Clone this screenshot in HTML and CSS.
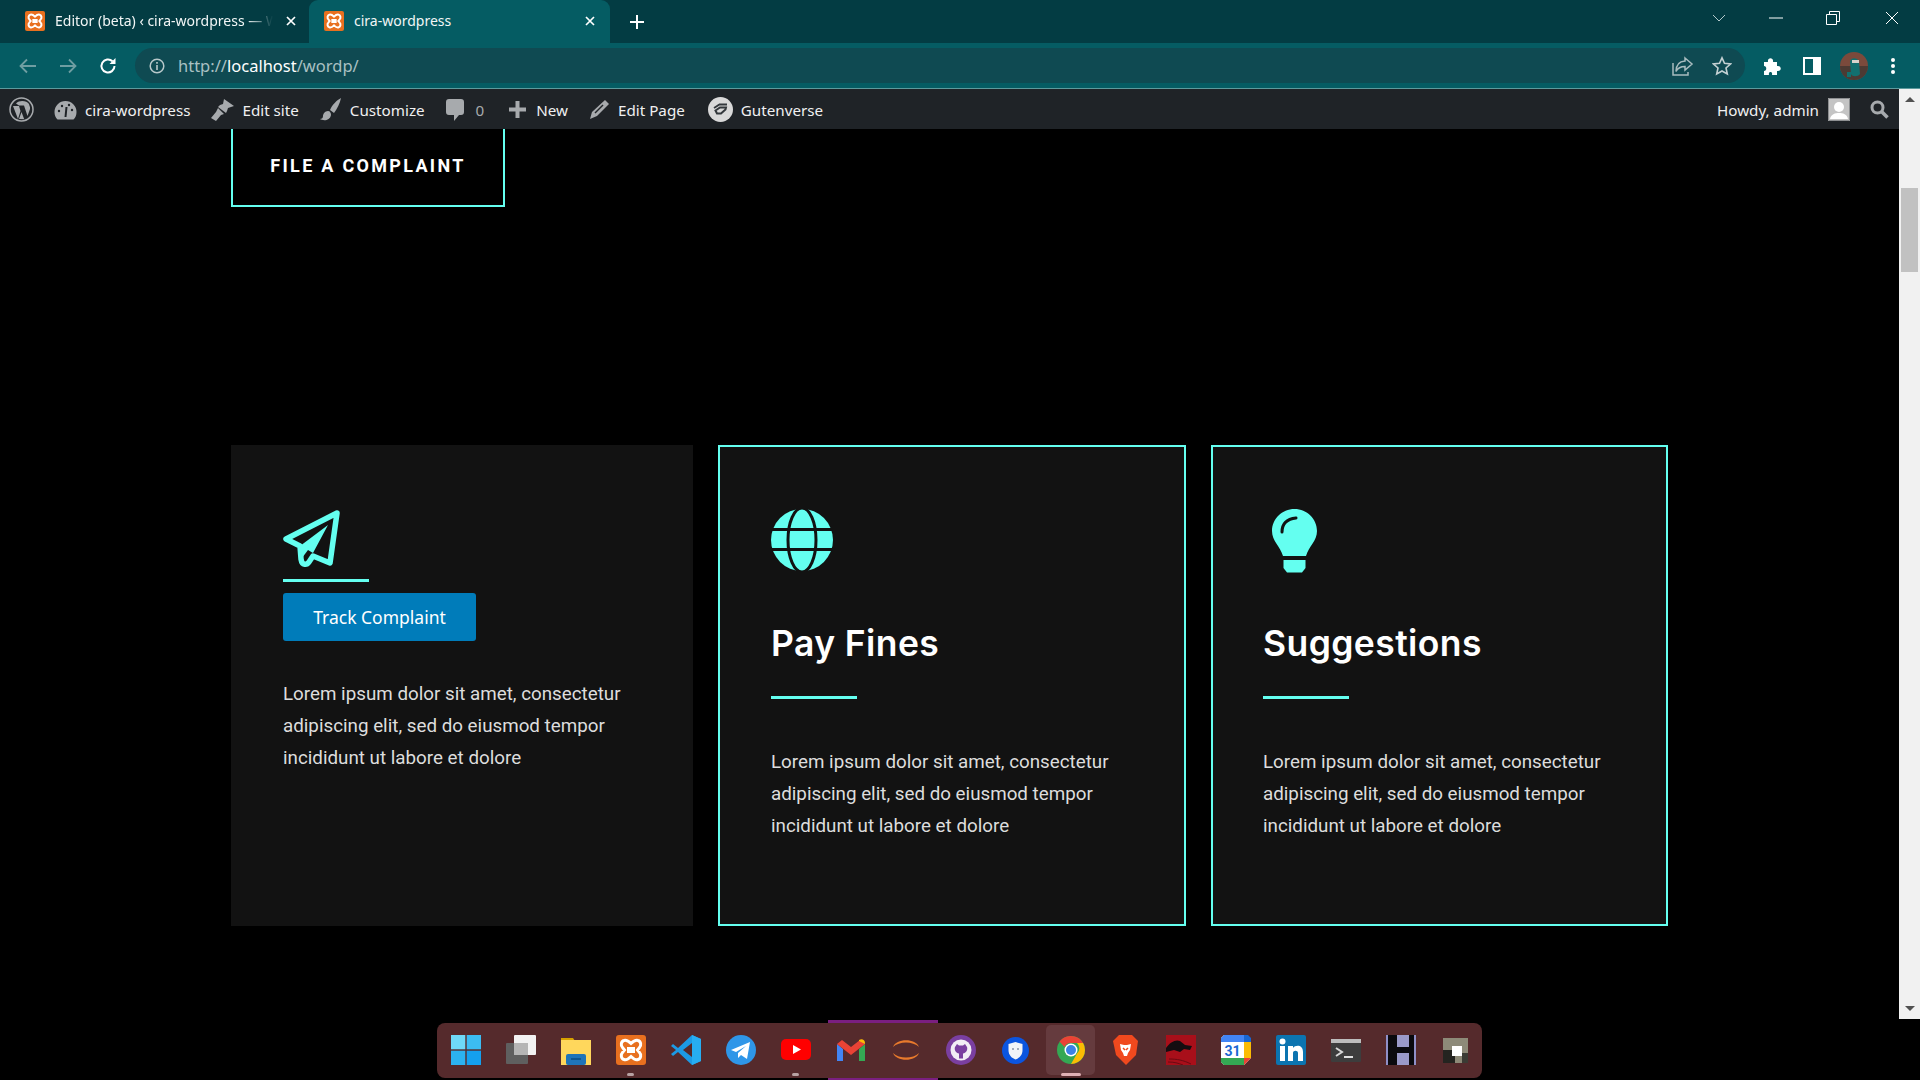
FILE: index.html
```html
<!DOCTYPE html>
<html lang="en">
<head>
    <meta charset="UTF-8">
    <meta name="viewport" content="width=device-width, initial-scale=1.0">
    <title>cira-wordpress</title>
    <link rel="stylesheet" href="styles.css">
</head>
<body>
    <svg class="defs" width="0" height="0">
        <symbol id="xampp" viewBox="0 0 30 30">
            <rect width="30" height="30" rx="3" fill="#e8701f"/>
            <path d="M8 5.500c3-1 5 1 7 3 2-2 4-4 7-3 3 .8 3.500 5 1.500 7L21.500 15l2 2.500c2 2 1.500 6.200-1.500 7-3 1-5-1-7-3-2 2-4 4-7 3-3-.8-3.500-5-1.500-7l2-2.500-2-2.500c-2-2-1.500-6.200 1.500-7zM11 13.500h8M11 16.500h8" fill="none" stroke="#fff" stroke-width="3"/>
        </symbol>
        <symbol id="tab-x" viewBox="0 0 12 12">
            <path d="M2 2l8 8M10 2l-8 8" stroke="#fff" stroke-width="1.700" fill="none"/>
        </symbol>
    </svg>

    <header class="tabstrip">
        <div class="tab">
            <svg class="favicon"><use href="#xampp"/></svg>
            <span class="tab-title tab-fade">Editor (beta) ‹ cira-wordpress — WordPress</span>
            <svg class="tab-close"><use href="#tab-x"/></svg>
        </div>
        <div class="tab tab-active">
            <svg class="favicon"><use href="#xampp"/></svg>
            <span class="tab-title">cira-wordpress</span>
            <svg class="tab-close"><use href="#tab-x"/></svg>
        </div>
        <svg class="new-tab" width="14" height="14" viewBox="0 0 14 14"><path d="M7 0v14M0 7h14" stroke="#fff" stroke-width="2"/></svg>
        <div class="window-controls">
            <svg width="14" height="8" viewBox="0 0 14 8"><path d="M1 1l6 6 6-6" fill="none" stroke="#b5c9cb"/></svg>
            <svg class="ctl-min" width="14" height="2" viewBox="0 0 14 2"><path d="M0 1h14" stroke="#fff"/></svg>
            <svg class="ctl-max" width="14" height="14" viewBox="0 0 14 14"><path d="M.5 3.500h10v10H.5zM3.500 3.500v-3h10v10h-3" fill="none" stroke="#fff"/></svg>
            <svg class="ctl-close" width="14" height="14" viewBox="0 0 14 14"><path d="M1 1l12 12M13 1L1 13" stroke="#fff"/></svg>
        </div>
    </header>

    <div class="toolbar">
        <svg class="nav-icon" width="18" height="16" viewBox="0 0 18 16"><path d="M17 8H2M8 1.500L1.500 8 8 14.500" fill="none" stroke="#6f9ea2" stroke-width="1.800"/></svg>
        <svg class="nav-icon" width="18" height="16" viewBox="0 0 18 16"><path d="M1 8h15M10 1.500L16.500 8 10 14.500" fill="none" stroke="#6f9ea2" stroke-width="1.800"/></svg>
        <svg class="nav-icon" width="18" height="18" viewBox="0 0 18 18"><path d="M15.500 9a6.500 6.500 0 1 1-2-4.700" fill="none" stroke="#fff" stroke-width="2"/><path d="M16.500 1v6h-6z" fill="#fff"/></svg>
        <div class="omnibox">
            <svg width="16" height="16" viewBox="0 0 16 16"><circle cx="8" cy="8" r="6.800" fill="none" stroke="#b8c8ca" stroke-width="1.500"/><path d="M8 7v5M8 4v1.800" stroke="#b8c8ca" stroke-width="1.600"/></svg>
            <span class="url">http://<b>localhost</b>/wordp/</span>
            <svg class="omni-share" width="22" height="20" viewBox="0 0 22 20"><path d="M13 2l7 6-7 6v-3.500c-4 0-7 1-9 5 0-6 3-10 9-10.500zM1 7v12h15v-3" fill="none" stroke="#a9bcbf" stroke-width="1.500"/></svg>
            <svg width="20" height="20" viewBox="0 0 20 20"><path d="M10 1.800l2.500 5.500 6 .7-4.500 4 1.300 6L10 15l-5.300 3 1.300-6-4.500-4 6-.7z" fill="none" stroke="#c3d0d2" stroke-width="1.600"/></svg>
        </div>
        <svg class="tool-puzzle" width="19" height="19" viewBox="0 0 19 19"><path d="M1 6h4c-1-5 6-5 5 0h4v4c5-1 5 6 0 5v4H9c1-4-4-4-3 0H1v-4c3 0 3-5 0-5z" fill="#fff"/></svg>
        <svg class="tool-side" width="18" height="18" viewBox="0 0 18 18"><rect x="1" y="1" width="16" height="16" fill="none" stroke="#fff" stroke-width="2"/><rect x="10" y="1" width="7" height="16" fill="#fff"/></svg>
        <svg class="tool-avatar" width="28" height="28" viewBox="0 0 28 28"><circle cx="14" cy="14" r="14" fill="#7b4a3c"/><path d="M0 14a14 14 0 0 0 28 0z" fill="#4c3a33"/><path d="M10 10c0-5 8-5 9 0l1 12c-2 3-8 3-9 0z" fill="#12706f"/><rect x="12" y="8" width="7" height="3" fill="#d8d4cc"/><path d="M7 20h4v5H7z" fill="#12706f"/></svg>
        <svg class="tool-menu" width="4" height="16" viewBox="0 0 4 16"><circle cx="2" cy="2" r="2" fill="#fff"/><circle cx="2" cy="8" r="2" fill="#fff"/><circle cx="2" cy="14" r="2" fill="#fff"/></svg>
    </div>

    <div class="viewport">
        <div class="site-column">
            <nav class="adminbar">
                <div class="ab-item ab-logo">
                    <svg width="25" height="25" viewBox="0 0 25 25"><circle cx="12.500" cy="12.500" r="11.500" fill="none" stroke="#a7aaad" stroke-width="1.500"/><path d="M4 9l5 13 2.500-8L10 9zM10 8.500h8l-3 0 3.500 10.500L21 12c.6-2-1-4-1-5-2-3-9-4.500-13-.5z" fill="#a7aaad"/><path d="M12.500 15l-2.500 7 5.200.3z" fill="#a7aaad"/></svg>
                </div>
                <div class="ab-item">
                    <svg width="23" height="20" viewBox="0 0 23 20"><path d="M11.500 1a11 11 0 0 0-11 11c0 3 1 5.500 3 7.500h16c2-2 3-4.500 3-7.500a11 11 0 0 0-11-11z" fill="#a7aaad"/><path d="M11.500 17l1-10" stroke="#1f2327" stroke-width="2"/><circle cx="5" cy="11" r="1.200" fill="#1f2327"/><circle cx="8" cy="6" r="1.200" fill="#1f2327"/><circle cx="15" cy="5" r="1.200" fill="#1f2327"/><circle cx="18" cy="10" r="1.200" fill="#1f2327"/></svg>
                    <span>cira-wordpress</span>
                </div>
                <div class="ab-item ab-edit">
                    <svg width="24" height="22" viewBox="0 0 24 22"><path d="M14 0l10 7-3 1-3 1-1 3-1 2-8-6 2-2 3-1z" fill="#a7aaad"/><path d="M8 9l6 6-3 1-5 6-5-3 5-6z" fill="#a7aaad"/></svg>
                    <span>Edit site</span>
                </div>
                <div class="ab-item">
                    <svg width="22" height="24" viewBox="0 0 22 24"><path d="M21 0c-4 2-9 7-11 12l4 3c3-4 6-10 7-15zM8 13c-3 0-5 3-5 5 0 2-1 3-3 3 3 2 10 2 11-4 0-2-1-4-3-4z" fill="#a7aaad"/></svg>
                    <span>Customize</span>
                </div>
                <div class="ab-item">
                    <svg width="18" height="24" viewBox="0 0 18 24"><path d="M3 1h12a3 3 0 0 1 3 3v10a3 3 0 0 1-3 3h-2l-5 6v-6H3a3 3 0 0 1-3-3V4a3 3 0 0 1 3-3z" fill="#a7aaad"/></svg>
                    <span class="ab-count">0</span>
                </div>
                <div class="ab-item ab-new">
                    <svg width="17" height="17" viewBox="0 0 17 17"><path d="M8.500 0v17M0 8.500h17" stroke="#a7aaad" stroke-width="4"/></svg>
                    <span>New</span>
                </div>
                <div class="ab-item">
                    <svg width="21" height="21" viewBox="0 0 21 21"><path d="M16 1l4 4L8 17l-7 3 2-7z" fill="#a7aaad"/><path d="M6 14l8-8" stroke="#1f2327" stroke-width="1.500"/></svg>
                    <span>Edit Page</span>
                </div>
                <div class="ab-item ab-guten">
                    <svg width="25" height="25" viewBox="0 0 25 25"><circle cx="12.500" cy="12.500" r="12.500" fill="#d9d9d9"/><path d="M6 11l5.500-3.500h7.500" fill="none" stroke="#33383c" stroke-width="1.800"/><path d="M7.500 13.500l4.500-3h6l-.5 2-4.500 4h-4z" fill="none" stroke="#33383c" stroke-width="2"/></svg>
                    <span>Gutenverse</span>
                </div>
                <div class="ab-right">
                    <span>Howdy, admin</span>
                    <svg class="ab-avatar" width="22" height="23" viewBox="0 0 22 23"><rect width="22" height="23" fill="#c4c4c4"/><circle cx="11" cy="9" r="5" fill="#fff"/><path d="M2 21c1-5 5-6 9-6s8 1 9 6z" fill="#fff"/><path d="M.5.500h21v22H.5z" fill="none" stroke="#8d8f91"/></svg>
                    <svg class="ab-search" width="19" height="19" viewBox="0 0 19 19"><circle cx="7.500" cy="7.500" r="5.500" fill="none" stroke="#a7aaad" stroke-width="3"/><path d="M11.500 11.500l6 6" stroke="#a7aaad" stroke-width="3.500"/></svg>
                </div>
            </nav>

            <main class="page">
                <a class="complaint-btn">FILE A COMPLAINT</a>
                <section class="cards">
                    <article class="card card-first">
                        <svg class="icon-box" width="57" height="62" viewBox="0 0 57 62"><path d="M54 4L3 30l14 7 1 13c1 7 6 6 8 3l4-6 17 7z" fill="none" stroke="#64fff0" stroke-width="5.500" stroke-linejoin="round"/><path d="M45 16L17 37l2 12 6-8 5 3z" fill="#64fff0"/></svg>
                        <div class="rule rule-tight"></div>
                        <a class="track-btn">Track Complaint</a>
                        <p class="card-text text-first">Lorem ipsum dolor sit amet, consectetur adipiscing elit, sed do eiusmod tempor incididunt ut labore et dolore</p>
                    </article>
                    <article class="card card-second">
                        <svg class="icon-box" width="62" height="62" viewBox="0 0 62 62"><circle cx="31" cy="31" r="31" fill="#64fff0"/><path d="M0 20.500h62M0 40.500h62" stroke="#121212" stroke-width="3"/><ellipse cx="31" cy="31" rx="14" ry="32" fill="none" stroke="#121212" stroke-width="3"/></svg>
                        <h2 class="card-title">Pay Fines</h2>
                        <div class="rule"></div>
                        <p class="card-text">Lorem ipsum dolor sit amet, consectetur adipiscing elit, sed do eiusmod tempor incididunt ut labore et dolore</p>
                    </article>
                    <article class="card card-third">
                        <svg class="icon-box icon-bulb" width="45" height="64" viewBox="0 0 45 64"><path d="M22.500 0C10 0 0 10 0 22c0 10 8 15 11 25h23c3-10 11-15 11-25C45 10 35 0 22.500 0z" fill="#64fff0"/><path d="M11.500 51h22v8l-3.500 4.500H15L11.500 59z" fill="#64fff0"/><path d="M10 23c0-8 5-13 14-14" fill="none" stroke="#121212" stroke-width="3" stroke-linecap="round"/></svg>
                        <h2 class="card-title">Suggestions</h2>
                        <div class="rule"></div>
                        <p class="card-text">Lorem ipsum dolor sit amet, consectetur adipiscing elit, sed do eiusmod tempor incididunt ut labore et dolore</p>
                    </article>
                </section>
            </main>
        </div>
        <div class="scrollbar">
            <div class="arrow-up"></div>
            <div class="thumb"></div>
            <div class="arrow-down"></div>
        </div>
    </div>

    <div class="taskbar-glow"></div>
    <footer class="taskbar">
        <div class="task"><svg width="30" height="30" viewBox="0 0 30 30"><rect width="14.300" height="14.300" fill="#6fd9f7"/><rect x="15.700" width="14.300" height="14.300" fill="#3cbcf2"/><rect y="15.700" width="14.300" height="14.300" fill="#2cb2f0"/><rect x="15.700" y="15.700" width="14.300" height="14.300" fill="#14a0ee"/></svg></div>
        <div class="task"><svg width="30" height="30" viewBox="0 0 30 30"><rect y="8" width="22" height="21" rx="1" fill="#5f5f5f"/><rect x="8" width="22" height="20" rx="1" fill="#f2f2f2"/><rect x="8" y="8" width="14" height="12" fill="#b5b5b5"/></svg></div>
        <div class="task"><svg width="30" height="30" viewBox="0 0 30 30"><path d="M0 3h12l2 3h-14z" fill="#d6a100"/><rect y="5" width="30" height="25" fill="#ffd75c"/><rect x="5" y="19" width="20" height="11" rx="2" fill="#1f74b8"/><path d="M10 24h10" stroke="#0b4d85" stroke-width="1.500"/></svg></div>
        <div class="task"><svg width="30" height="30"><use href="#xampp"/></svg><i class="run-dot"></i></div>
        <div class="task"><svg width="30" height="30" viewBox="0 0 30 30"><path d="M21 0l9 4v22l-9 4L7 17l-5 4-2-2 5-4-5-4 2-2 5 4z" fill="#1c9be6"/><path d="M21 0l9 4v22l-9 4z" fill="#27aef2"/><path d="M21 8v14l-9-7z" fill="#552a2c"/></svg></div>
        <div class="task"><svg width="30" height="30" viewBox="0 0 30 30"><circle cx="15" cy="15" r="15" fill="#2f96e8"/><path d="M5 15l19-8-3 17-6-4-3 3v-5l8-7-10 6z" fill="#fff"/></svg></div>
        <div class="task"><svg width="30" height="22" viewBox="0 0 30 22"><rect width="30" height="21" rx="5" fill="#f00"/><path d="M12 6l8 4.500-8 4.500z" fill="#fff"/></svg><i class="run-dot"></i></div>
        <div class="task"><svg width="28" height="22" viewBox="0 0 28 22"><path d="M0 5v17h6V10z" fill="#4285f4"/><path d="M22 10v12h6V5z" fill="#34a853"/><path d="M0 5l14 11L28 5l-5-4-9 7-9-7z" fill="#ea4335"/><path d="M22 2l6 3v-1c0-3-3-5-6-3z" fill="#fbbc04"/></svg></div>
        <div class="task"><svg width="30" height="30" viewBox="0 0 30 30"><path d="M2 12C5 3 25 3 28 12 22 6 8 6 2 12zM2 18c3 9 23 9 26 0-6 6-20 6-26 0z" fill="#e87a2c"/></svg></div>
        <div class="task"><svg width="30" height="30" viewBox="0 0 30 30"><circle cx="15" cy="15" r="15" fill="#7a3fa0"/><circle cx="15" cy="15" r="10.500" fill="#f2edf5"/><path d="M9 12l2-3 2 1.500h4l2-1.500 2 3c1 3-1 6-4 6.500v5h-4v-5c-3-.5-5-3.500-4-6.500z" fill="#7a3fa0"/></svg></div>
        <div class="task"><svg width="27" height="27" viewBox="0 0 27 27"><circle cx="13.500" cy="13.500" r="13.500" fill="#0b55e0"/><path d="M13.500 5l7 2v6c0 5-3 8-7 9.500C9.500 21 6.500 18 6.500 13V7z" fill="#f2f4f8"/><circle cx="11" cy="12" r="1" fill="#8a95a8"/><circle cx="16" cy="12" r="1" fill="#8a95a8"/></svg></div>
        <div class="task task-current"><svg width="28" height="28" viewBox="0 0 28 28"><circle cx="14" cy="14" r="14" fill="#34a853"/><path d="M14 0a14 14 0 0 1 12.100 7H14a7 7 0 0 0-6.500 4L2.500 5.500A14 14 0 0 1 14 0z" fill="#ea4335"/><path d="M26.100 7A14 14 0 0 1 14 28l6-10.500A7 7 0 0 0 20 7z" fill="#fbbc04"/><circle cx="14" cy="14" r="6.500" fill="#fff"/><circle cx="14" cy="14" r="5" fill="#3b82e6"/></svg><i class="run-dot run-active"></i></div>
        <div class="task"><svg width="25" height="30" viewBox="0 0 25 30"><path d="M6 0h13l3 3 3 3-2 14-8 8-2 2-2-2-8-8L0 6l3-3z" fill="#f0491e"/><path d="M7 9l4 1h3l4-1-1 6-2 3-1 3h-3l-1-3-2-3z" fill="#fff"/><path d="M10 13l2 2M15 13l-2 2" stroke="#f0491e" stroke-width="1.500"/></svg></div>
        <div class="task"><svg width="30" height="30" viewBox="0 0 30 30"><rect width="30" height="30" fill="#a80f1a"/><path d="M0 13c4-6 10-9 14-7l5 4 7 1-2 4-6-1-4 3-6-2-8 2z" fill="#140d10"/><path d="M3 24c8 0 14 1 22 5M2 27c6 0 10 1 15 3" stroke="#6b0a12" fill="none"/></svg></div>
        <div class="task"><svg width="30" height="30" viewBox="0 0 30 30"><path d="M3 0h20l7 7v16l-7 7H3l-3-3V3z" fill="#fff"/><path d="M23 0h4l3 3v4h-7z" fill="#1967d2"/><rect x="23" y="7" width="7" height="16" fill="#fbbc04"/><path d="M0 23h23v7H3l-3-3z" fill="#34a853"/><path d="M23 23h7l-7 7z" fill="#ea4335"/><path d="M0 3l3-3h20v7H0z" fill="#4285f4"/><text class="cal-text" x="11.500" y="21">31</text></svg></div>
        <div class="task"><svg width="30" height="30" viewBox="0 0 30 30"><rect width="30" height="30" rx="2" fill="#0b74b0"/><rect x="4" y="11" width="5" height="15" fill="#fff"/><circle cx="6.500" cy="6.500" r="3" fill="#fff"/><path d="M12 11h5v2c2-3 10-4 10 4v9h-5v-8c0-3-5-3-5 0v8h-5z" fill="#fff"/></svg></div>
        <div class="task"><svg width="30" height="23" viewBox="0 0 30 23"><rect width="30" height="23" rx="1" fill="#3d3d3d"/><rect width="30" height="4" fill="#bdbdbd"/><path d="M5 9l6 4-6 4" fill="none" stroke="#d8d8d8" stroke-width="2"/><path d="M13 18h9" stroke="#e0e0e0" stroke-width="2"/></svg></div>
        <div class="task"><svg width="30" height="30" viewBox="0 0 30 30"><rect width="30" height="30" fill="#0a0a0e"/><rect width="2" height="30" fill="#8f8fc7"/><rect x="28" width="2" height="30" fill="#8f8fc7"/><rect x="11" width="12" height="12" fill="#9a9ac9"/><rect x="11" y="18" width="12" height="12" fill="#9a9ac9"/></svg></div>
        <div class="task"><svg width="25" height="25" viewBox="0 0 25 25"><rect width="25" height="25" fill="#8d8a78"/><rect y="12" width="12" height="13" fill="#242420"/><rect x="9" y="8" width="10" height="10" fill="#fff"/><rect x="19" y="15" width="6" height="10" fill="#3b3b34"/></svg></div>
    </footer>
</body>
</html>
```

FILE: styles.css
```css
* {
    box-sizing: border-box;
}

html,
body {
    margin: 0;
    padding: 0;
    height: 1080px;
    overflow: hidden;
    background-color: #000;
}

body {
    position: relative;
    font-family: "Noto Sans", sans-serif;
    color: #fff;
}

.defs {
    display: block;
    height: 0;
}

/* browser top */
.tabstrip {
    display: flex;
    align-items: flex-end;
    height: 43px;
    background-color: #033c43;
}

.tab {
    display: flex;
    align-items: center;
    width: 309px;
    height: 43px;
    padding: 0 12px 2px 25px;
    font-size: 14px;
    color: #f2f6f6;
}

.tab-active {
    width: 301px;
    padding: 0 14px 2px 15px;
    background-color: #055c63;
    border-radius: 9px 9px 0 0;
}

.favicon {
    width: 20px;
    height: 20px;
    flex: none;
}

.tab-title {
    flex: 1;
    margin-left: 10px;
    margin-right: 12px;
    white-space: nowrap;
    overflow: hidden;
}

.tab-fade {
    -webkit-mask-image: linear-gradient(to right, #000 88%, transparent 100%);
    mask-image: linear-gradient(to right, #000 88%, transparent 100%);
}

.tab-close {
    width: 12px;
    height: 12px;
    flex: none;
}

.new-tab {
    margin: 0 0 14px 20px;
}

.window-controls {
    display: flex;
    align-items: center;
    align-self: flex-start;
    height: 36px;
    margin-left: auto;
    padding-right: 21px;
}

.ctl-min {
    margin-left: 43px;
}

.ctl-max {
    margin-left: 43px;
}

.ctl-close {
    margin-left: 45px;
}

.toolbar {
    display: flex;
    align-items: center;
    height: 46px;
    background-color: #055c63;
    border-bottom: 1px solid #5c9a9d;
    padding-left: 19px;
}

.nav-icon {
    margin-right: 22px;
}

.omnibox {
    display: flex;
    align-items: center;
    width: 1610px;
    height: 35px;
    margin-left: -4px;
    padding: 0 13px 0 14px;
    background-color: #0f4a52;
    border-radius: 18px;
}

.url {
    margin-left: 13px;
    font-size: 16.500px;
    color: #a9c0c3;
}

.url b {
    font-weight: 400;
    color: #fff;
}

.omni-share {
    margin-left: auto;
    margin-right: 18px;
}

.tool-puzzle {
    margin-left: 18px;
}

.tool-side {
    margin-left: 21px;
}

.tool-avatar {
    margin-left: 19px;
}

.tool-menu {
    margin-left: 23px;
}

/* wordpress + page */
.viewport {
    display: flex;
    height: 930px;
}

.site-column {
    flex: 1;
    min-width: 0;
    display: flex;
    flex-direction: column;
}

.adminbar {
    display: flex;
    align-items: center;
    gap: 21px;
    height: 40px;
    flex: none;
    padding: 1px 10px 0 9px;
    background-color: #1f2327;
    font-size: 15.200px;
    color: #f0f0f1;
}

.ab-item {
    display: flex;
    align-items: center;
    gap: 8px;
}

.ab-logo {
    margin-right: -1px;
}

.ab-edit {
    margin-left: -1px;
}

.ab-new {
    gap: 10px;
    margin-left: 4px;
}

.ab-guten {
    margin-left: 2px;
}

.ab-count {
    margin-left: 4px;
    color: #a7aaad;
}

.ab-right {
    display: flex;
    align-items: center;
    margin-left: auto;
}

.ab-avatar {
    margin-left: 9px;
}

.ab-search {
    margin-left: 20px;
}

.page {
    flex: 1;
    background-color: #000;
}

.complaint-btn {
    display: block;
    width: 274px;
    height: 78px;
    margin-left: 231px;
    padding-top: 22px;
    border: 2px solid #64fff0;
    border-top: none;
    font-family: Roboto, sans-serif;
    font-size: 18px;
    font-weight: 700;
    line-height: 30px;
    letter-spacing: 2.300px;
    text-align: center;
}

.cards {
    display: flex;
    gap: 25px;
    margin: 238px 0 0 231px;
}

.card {
    height: 481px;
    background-color: #121212;
}

.card-first {
    width: 462px;
    padding: 64px 52px 0;
}

.card-second,
.card-third {
    border: 2px solid #64fff0;
    padding-top: 62px;
}

.card-second {
    width: 468px;
    padding-left: 51px;
    padding-right: 40px;
}

.card-third {
    width: 457px;
    padding-left: 50px;
    padding-right: 40px;
}

.icon-box {
    display: block;
}

.icon-bulb {
    margin: 0 0 -2px 9px;
}

.card-title {
    margin: 48px 0 0;
    font-family: Inter, sans-serif;
    font-size: 35.500px;
    font-weight: 600;
    line-height: 50px;
    letter-spacing: .4px;
    color: #fff;
}

.rule {
    width: 86px;
    height: 3px;
    margin-top: 27px;
    background-color: #64fff0;
}

.rule-tight {
    margin-top: 8px;
}

.track-btn {
    display: block;
    width: 193px;
    height: 48px;
    margin-top: 11px;
    border-radius: 3px;
    background-color: #007cba;
    font-size: 17.500px;
    line-height: 48px;
    text-align: center;
}

.card-text {
    margin: 47px 0 0;
    font-family: Roboto, sans-serif;
    font-size: 18.800px;
    line-height: 32px;
    color: #ddd;
}

.text-first {
    margin-top: 37px;
}

.scrollbar {
    position: relative;
    width: 21px;
    flex: none;
    background-color: #f1f1f1;
}

.thumb {
    position: absolute;
    top: 99px;
    left: 2px;
    width: 17px;
    height: 84px;
    background-color: #c1c1c1;
}

.arrow-up,
.arrow-down {
    position: absolute;
    left: 6px;
    width: 0;
    height: 0;
    border-left: 5px solid transparent;
    border-right: 5px solid transparent;
}

.arrow-up {
    top: 8px;
    border-bottom: 5px solid #505050;
}

.arrow-down {
    bottom: 8px;
    border-top: 5px solid #505050;
}

/* windows taskbar floats over the page */
.taskbar-glow {
    position: absolute;
    left: 828px;
    top: 1020px;
    width: 110px;
    height: 60px;
    background-color: #7a1f80;
}

.taskbar {
    position: absolute;
    left: 437px;
    top: 1023px;
    display: flex;
    width: 1045px;
    height: 55px;
    padding-left: 1px;
    border-radius: 8px;
    background-color: #552a2c;
}

.task {
    position: relative;
    display: flex;
    flex: none;
    align-items: center;
    justify-content: center;
    width: 55px;
    height: 50px;
    margin-top: 2px;
}

.task-current {
    width: 49px;
    margin-left: 3px;
    margin-right: 3px;
    background-color: #653b3e;
    border-radius: 5px;
}

.run-dot {
    position: absolute;
    left: 24px;
    bottom: -1px;
    width: 7px;
    height: 3px;
    border-radius: 2px;
    background-color: #b8a2a3;
}

.run-active {
    left: 15px;
    width: 20px;
    background-color: #e0b0b4;
}

.cal-text {
    font-family: Roboto, sans-serif;
    font-size: 14px;
    font-weight: 700;
    fill: #1967d2;
    text-anchor: middle;
}
```
